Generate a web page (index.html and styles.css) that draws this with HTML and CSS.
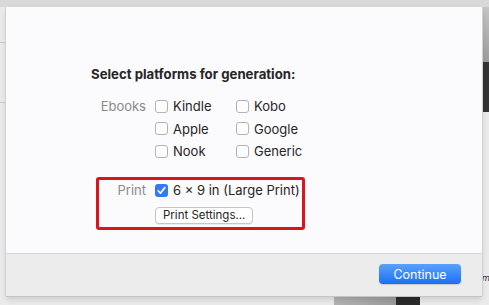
FILE: index.html
```html
<!DOCTYPE html>
<html lang="en">
<head>
    <meta charset="UTF-8">
    <meta name="viewport" content="width=device-width, initial-scale=1.0">
    <title>Select platforms</title>
    <link rel="stylesheet" href="styles.css">
</head>
<body>
    <div class="screen">
        <!-- bits of the window behind the sheet -->
        <div class="behind-line line-a"></div>
        <div class="behind-line line-b"></div>
        <div class="behind-dark"></div>
        <div class="behind-grey"></div>
        <div class="behind-thumb"></div>
        <div class="behind-text">m</div>

        <div class="topbar"></div>

        <div class="dialog">
            <div class="dialog-body">
                <h2 class="title">Select platforms for generation:</h2>

                <div class="options">
                    <span class="group-label">Ebooks</span>
                    <label class="check"><span class="box"></span>Kindle</label>
                    <label class="check"><span class="box"></span>Kobo</label>

                    <span></span>
                    <label class="check"><span class="box"></span>Apple</label>
                    <label class="check"><span class="box"></span>Google</label>

                    <span></span>
                    <label class="check"><span class="box"></span>Nook</label>
                    <label class="check"><span class="box"></span>Generic</label>
                </div>

                <div class="print-group">
                    <span class="group-label">Print</span>
                    <label class="check">
                        <span class="box checked">
                            <svg viewBox="0 0 13 13" width="13" height="13"><path d="M3.2 6.8 L5.4 9.2 L9.8 3.6" fill="none" stroke="#fff" stroke-width="1.7" stroke-linecap="round" stroke-linejoin="round"/></svg>
                        </span>6 × 9 in (Large Print)
                    </label>
                    <span></span>
                    <div><button class="small-btn">Print Settings...</button></div>
                </div>
            </div>
            <div class="dialog-footer">
                <button class="primary-btn">Continue</button>
            </div>
        </div>
    </div>
</body>
</html>
```

FILE: styles.css
```css
body {
    margin: 0;
    padding: 0;
    font-family: Inter, "Noto Sans", sans-serif;
    background-color: #ececec;
}
.screen {
    position: relative;
    width: 489px;
    height: 305px;
    overflow: hidden;
    background-color: #ebebeb;
}
.topbar {
    height: 7px;
    background-color: #d8d8d8;
}

/* background window pieces */
.behind-line {
    position: absolute;
    left: 0;
    width: 6px;
    height: 1px;
    background-color: #c9c9c9;
}
.line-a { top: 42px; }
.line-b { top: 102px; }
.behind-grey {
    position: absolute;
    right: 0;
    top: 7px;
    width: 7px;
    height: 55px;
    background: linear-gradient(#c4c4c4, #9d9d9d);
}
.behind-dark {
    position: absolute;
    right: 0;
    top: 62px;
    width: 7px;
    height: 50px;
    background-color: #343434;
}
.behind-thumb {
    position: absolute;
    left: 334px;
    top: 296px;
    width: 86px;
    height: 9px;
    background: linear-gradient(90deg, #b4b4b4 0, #9c9c9c 72%, #2b2b2b 72%);
}
.behind-text {
    position: absolute;
    left: 482px;
    top: 272px;
    font-size: 9px;
    font-style: italic;
    color: #333;
}

/* the sheet */
.dialog {
    position: relative;
    margin-left: 6px;
    width: 476px;
    height: 289px;
    display: flex;
    flex-direction: column;
    box-shadow: 0 1px 0 #c4c4c4, -1px 0 0 #d2d2d2, 1px 0 0 #d2d2d2, 0 4px 6px rgba(0, 0, 0, 0.12);
}
.dialog-body {
    height: 246px;
    background-color: #fbfafc;
    padding: 59px 0 0 85px;
    box-sizing: border-box;
}
.dialog-footer {
    flex: 1;
    background-color: #ececec;
    border-top: 1px solid #d3d3d3;
    display: flex;
    justify-content: flex-end;
    align-items: flex-start;
    padding: 10px 21px 0 0;
}
.title {
    margin: 0;
    font-size: 13.2px;
    line-height: 16px;
    font-weight: 700;
    color: #262626;
}
.options {
    margin-top: 13px;
    display: grid;
    grid-template-columns: 55px 72px auto;
    column-gap: 9px;
    grid-auto-rows: 22.5px;
    align-items: center;
}
.group-label {
    text-align: right;
    font-size: 13px;
    color: #8a8a8a;
}
.check {
    display: flex;
    align-items: center;
    gap: 5px;
    font-size: 13px;
    color: #262626;
    white-space: nowrap;
}
.box {
    width: 13px;
    height: 13px;
    box-sizing: border-box;
    border: 1px solid #b3b3b3;
    border-radius: 3px;
    background-color: #fff;
    flex: none;
}
.box.checked {
    border: none;
    background-color: #3479f5;
}
.box svg {
    display: block;
}

.print-group {
    margin: 14px 0 0 5px;
    width: 209px;
    box-sizing: border-box;
    border: 3px solid #d8141c;
    border-radius: 3px;
    padding: 4px 0 3px;
    display: grid;
    grid-template-columns: 47px auto;
    grid-template-rows: 13px 17px;
    column-gap: 9px;
    row-gap: 10px;
    align-items: center;
}
.small-btn {
    display: block;
    height: 17px;
    padding: 0 7px;
    font-family: inherit;
    font-size: 11.5px;
    color: #262626;
    background-color: #fff;
    border: 1px solid #c6c6c6;
    border-radius: 4px;
    box-shadow: 0 1px 0 rgba(0, 0, 0, 0.06);
}
.primary-btn {
    width: 82px;
    height: 20px;
    padding: 0;
    font-family: inherit;
    font-size: 12.5px;
    color: #fff;
    border: none;
    border-radius: 4px;
    background: linear-gradient(#5aa2fb, #1b6ff5);
    box-shadow: 0 1px 1px rgba(0, 0, 0, 0.15);
}
```
